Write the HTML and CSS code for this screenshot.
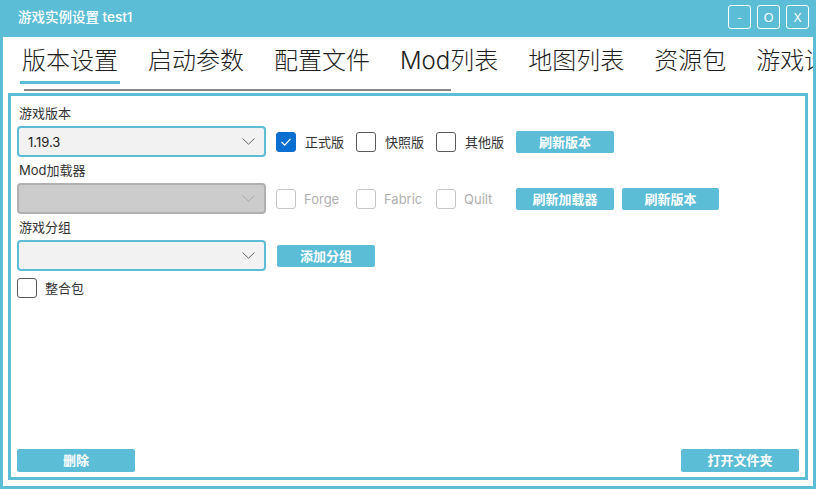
FILE: index.html
```html
<!DOCTYPE html>
<html lang="zh-CN">
<head>
<meta charset="utf-8">
<title>游戏实例设置 test1</title>
<link rel="stylesheet" href="styles.css">
</head>
<body>
<div class="window">
  <div class="titlebar">
    <div class="title">游戏实例设置 test1</div>
    <div class="win-btns">
      <div class="win-btn">-</div>
      <div class="win-btn">O</div>
      <div class="win-btn">X</div>
    </div>
  </div>
  <div class="client">
    <div class="tabs">
      <div class="tab-list">
        <div class="tab active">版本设置</div>
        <div class="tab">启动参数</div>
        <div class="tab">配置文件</div>
        <div class="tab">Mod列表</div>
        <div class="tab">地图列表</div>
        <div class="tab">资源包</div>
        <div class="tab">游戏设置</div>
      </div>
      <div class="tab-scroll"></div>
    </div>
    <div class="panel">
      <div class="group">
        <div class="label">游戏版本</div>
        <div class="row">
          <div class="combo"><span class="combo-text">1.19.3</span>
            <svg class="chev" width="13" height="7" viewBox="0 0 13 7"><polyline points="0.5,0.5 6.5,6.2 12.5,0.5" fill="none" stroke="#666" stroke-width="1"/></svg>
          </div>
          <div class="checks">
            <div class="check-item"><span class="box checked"><svg width="20" height="20" viewBox="0 0 20 20"><polyline points="5.5,10 8.7,13.2 14.5,6.8" fill="none" stroke="#fff" stroke-width="1.2"/></svg></span><span class="check-label">正式版</span></div>
            <div class="check-item"><span class="box"></span><span class="check-label">快照版</span></div>
            <div class="check-item"><span class="box"></span><span class="check-label">其他版</span></div>
          </div>
          <div class="btn">刷新版本</div>
        </div>
      </div>
      <div class="group">
        <div class="label">Mod加载器</div>
        <div class="row">
          <div class="combo disabled">
            <svg class="chev" width="13" height="7" viewBox="0 0 13 7"><polyline points="0.5,0.5 6.5,6.2 12.5,0.5" fill="none" stroke="#a8a8a8" stroke-width="1"/></svg>
          </div>
          <div class="checks">
            <div class="check-item dis"><span class="box"></span><span class="check-label">Forge</span></div>
            <div class="check-item dis"><span class="box"></span><span class="check-label">Fabric</span></div>
            <div class="check-item dis"><span class="box"></span><span class="check-label">Quilt</span></div>
          </div>
          <div class="btn">刷新加载器</div>
          <div class="btn btn-gap">刷新版本</div>
        </div>
      </div>
      <div class="group">
        <div class="label">游戏分组</div>
        <div class="row">
          <div class="combo">
            <svg class="chev" width="13" height="7" viewBox="0 0 13 7"><polyline points="0.5,0.5 6.5,6.2 12.5,0.5" fill="none" stroke="#666" stroke-width="1"/></svg>
          </div>
          <div class="btn btn-add">添加分组</div>
        </div>
      </div>
      <div class="pack">
        <span class="box"></span><span class="check-label">整合包</span>
      </div>
      <div class="spacer"></div>
      <div class="bottom">
        <div class="btn btn-wide">删除</div>
        <div class="btn btn-wide">打开文件夹</div>
      </div>
    </div>
  </div>
</div>
</body>
</html>
```

FILE: styles.css
```css
* { box-sizing: border-box; }
html, body { margin: 0; padding: 0; }
body {
  font-family: "Inter", "Noto Sans CJK SC", sans-serif;
  background: #fff;
}
.window {
  width: 816px;
  height: 489px;
  background: #5bbdd6;
  display: flex;
  flex-direction: column;
  padding: 0 3px 3px 3px;
}
.titlebar {
  height: 37px;
  display: flex;
  align-items: flex-start;
  justify-content: space-between;
  flex: none;
}
.title {
  color: #fff;
  font-size: 13.5px;
  font-weight: 500;
  line-height: 20px;
  padding: 7px 0 0 15px;
}
.win-btns {
  display: flex;
  gap: 6px;
  padding: 5px 4px 0 0;
}
.win-btn {
  width: 23px;
  height: 24px;
  border: 1px solid #fff;
  border-radius: 3px;
  color: #fff;
  font-family: "Noto Sans", sans-serif;
  font-size: 13px;
  line-height: 22px;
  text-align: center;
}
.client {
  flex: 1;
  background: #fff;
  display: flex;
  flex-direction: column;
  overflow: hidden;
}
.tabs {
  height: 56px;
  flex: none;
  overflow: hidden;
}
.tab-list {
  display: flex;
  padding: 9px 0 0 17px;
  gap: 26px;
  white-space: nowrap;
}
.tab {
  font-family: "Inter", "Noto Sans CJK SC", sans-serif;
  font-size: 24px;
  font-weight: 300;
  line-height: 30px;
  color: #1e1e1e;
  padding: 0 2px 5px 2px;
  border-bottom: 3px solid transparent;
  flex: none;
}
.tab.active { border-bottom-color: #5bbdd6; }
.tab-scroll {
  margin: 5px 0 0 21px;
  width: 427px;
  height: 2px;
  background: #888;
}
.panel {
  flex: 1;
  margin: 0 5px 6px 5px;
  border: 3px solid #5bbdd6;
  padding: 8px 6px 5px 6px;
  display: flex;
  flex-direction: column;
}
.group { margin-bottom: 4px; }
.label {
  font-size: 13px;
  line-height: 18px;
  color: #333;
  margin: 0 0 4px 2px;
}
.row {
  display: flex;
  align-items: center;
  height: 31px;
}
.combo {
  width: 249px;
  height: 31px;
  border: 2px solid #5bbdd6;
  border-radius: 4px;
  background: #f2f2f2;
  display: flex;
  align-items: center;
  padding: 0 9px 0 9px;
  flex: none;
}
.combo.disabled {
  background: #cccccc;
  border-color: #b0b0b0;
}
.combo-text {
  font-size: 13px;
  color: #222;
}
.chev { margin-left: auto; }
.checks {
  display: flex;
  margin-left: 10px;
}
.check-item {
  width: 80px;
  display: flex;
  align-items: center;
}
.box {
  width: 20px;
  height: 20px;
  border: 1px solid #5a5a5a;
  border-radius: 3px;
  background: #fff;
  flex: none;
  display: block;
}
.box.checked {
  background: #0b6fd2;
  border-color: #0b6fd2;
}
.box.checked svg { display: block; margin: -1px; }
.check-label {
  font-size: 13px;
  color: #333;
  margin-left: 9px;
  line-height: 18px;
}
.dis .box { border-color: #c6c6c6; }
.dis .check-label { color: #b0b0b0; margin-left: 8px; }
.btn {
  width: 98px;
  height: 22px;
  background: #5bbdd6;
  border-radius: 2px;
  color: #fff;
  font-size: 13px;
  font-weight: 700;
  line-height: 22px;
  text-align: center;
  flex: none;
}
.btn-gap { margin-left: 8px; width: 97px; }
.btn-add { margin-left: 11px; }
.pack {
  display: flex;
  align-items: center;
  margin-top: 3px;
}
.pack .check-label { margin-left: 8px; }
.spacer { flex: 1; }
.bottom {
  display: flex;
  justify-content: space-between;
}
.btn-wide {
  width: 118px;
  height: 23px;
  line-height: 23px;
}
```
